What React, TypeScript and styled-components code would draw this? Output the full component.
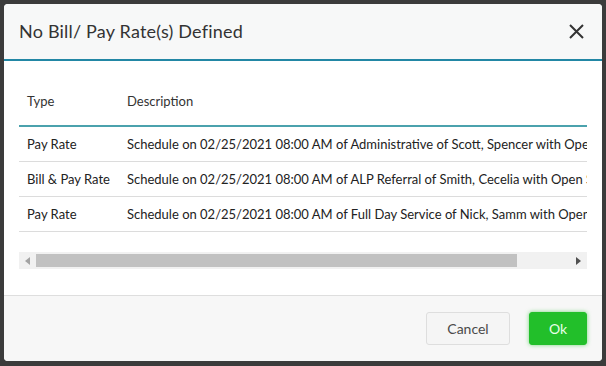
import React from "react";
import styled, { createGlobalStyle } from "styled-components";

type Row = {
  type: string;
  description: string;
};

const rows: Row[] = [
  {
    type: "Pay Rate",
    description:
      "Schedule on 02/25/2021 08:00 AM of Administrative of Scott, Spencer with Open Shift",
  },
  {
    type: "Bill & Pay Rate",
    description: "Schedule on 02/25/2021 08:00 AM of ALP Referral of Smith, Cecelia with Open Shift",
  },
  {
    type: "Pay Rate",
    description: "Schedule on 02/25/2021 08:00 AM of Full Day Service of Nick, Samm with Open Shift",
  },
];

// visible width of the grid vs. width of its content
const VIEW_WIDTH = 568;
const TABLE_WIDTH = 630;
const ARROW = 17;

const GlobalStyle = createGlobalStyle`
  html, body {
    margin: 0;
    padding: 0;
    background: #3b3b3b;
  }
  body {
    font-family: Lato, "Open Sans", sans-serif;
  }
`;

const App: React.FC = () => {
  const thumbWidth = Math.round(((VIEW_WIDTH - ARROW * 2) * VIEW_WIDTH) / TABLE_WIDTH);

  return (
    <>
      <GlobalStyle />
      <Backdrop>
        <Modal>
          <Header>
            <Title>No Bill/ Pay Rate(s) Defined</Title>
            <CloseButton aria-label="Close">
              <svg width="15" height="15" viewBox="0 0 15 15">
                <path d="M1 1 L14 14 M14 1 L1 14" stroke="#333" strokeWidth="2" />
              </svg>
            </CloseButton>
          </Header>

          <Body>
            <TableView>
              <Table>
                <thead>
                  <tr>
                    <HeadCell $width={84}>Type</HeadCell>
                    <HeadCell>Description</HeadCell>
                  </tr>
                </thead>
                <tbody>
                  {rows.map((row, i) => (
                    <tr key={i}>
                      <Cell>{row.type}</Cell>
                      <Cell>{row.description}</Cell>
                    </tr>
                  ))}
                </tbody>
              </Table>
            </TableView>

            <ScrollBar>
              <ScrollArrow>
                <svg width="5" height="8" viewBox="0 0 5 8">
                  <path d="M0 4 L5 0 L5 8 Z" fill="#a3a3a3" />
                </svg>
              </ScrollArrow>
              <ScrollTrack>
                <ScrollThumb style={{ width: thumbWidth }} />
              </ScrollTrack>
              <ScrollArrow>
                <svg width="5" height="8" viewBox="0 0 5 8">
                  <path d="M5 4 L0 0 L0 8 Z" fill="#505050" />
                </svg>
              </ScrollArrow>
            </ScrollBar>
          </Body>

          <Footer>
            <Button>Cancel</Button>
            <Button $primary>Ok</Button>
          </Footer>
        </Modal>
      </Backdrop>
    </>
  );
};

const Backdrop = styled.div`
  width: 606px;
  height: 366px;
  box-sizing: border-box;
  padding: 4px;
  background: #3b3b3b;
`;

const Modal = styled.div`
  width: 598px;
  height: 357px;
  display: flex;
  flex-direction: column;
  background: #fff;
  border-radius: 4px;
  overflow: hidden;
`;

const Header = styled.div`
  height: 55px;
  flex-shrink: 0;
  display: flex;
  align-items: center;
  justify-content: space-between;
  padding: 0 18px 0 15px;
  background: #f7f8f8;
  border-bottom: 2px solid #2287a5;
`;

const Title = styled.h2`
  margin: 0 0 1px 0;
  font-size: 18px;
  font-weight: 400;
  color: #333;
  letter-spacing: 0.2px;
`;

const CloseButton = styled.button`
  border: 0;
  background: transparent;
  padding: 0;
  display: flex;
  cursor: pointer;
`;

const Body = styled.div`
  flex: 1;
  padding: 15px 15px 0 15px;
`;

const TableView = styled.div`
  width: ${VIEW_WIDTH}px;
  overflow: hidden;
`;

const Table = styled.table`
  width: ${TABLE_WIDTH}px;
  table-layout: fixed;
  border-collapse: collapse;
`;

const HeadCell = styled.th<{ $width?: number }>`
  width: ${(p) => (p.$width ? `${p.$width}px` : "auto")};
  height: 49px;
  padding: 0 8px;
  text-align: left;
  font-size: 13px;
  font-weight: 400;
  color: #333;
  border-bottom: 2px solid #4ba2ad;
  white-space: nowrap;
`;

const Cell = styled.td`
  height: 34px;
  padding: 0 8px;
  font-size: 13px;
  color: #222;
  border-bottom: 1px solid #dcdcdc;
  white-space: nowrap;
  overflow: hidden;
`;

const ScrollBar = styled.div`
  margin-top: 20px;
  width: ${VIEW_WIDTH}px;
  height: ${ARROW}px;
  display: flex;
  background: #f1f1f1;
`;

const ScrollArrow = styled.div`
  width: ${ARROW}px;
  flex-shrink: 0;
  display: flex;
  align-items: center;
  justify-content: center;
`;

const ScrollTrack = styled.div`
  flex: 1;
  display: flex;
  align-items: center;
`;

const ScrollThumb = styled.div`
  height: 13px;
  background: #c1c1c1;
`;

const Footer = styled.div`
  height: 66px;
  flex-shrink: 0;
  display: flex;
  align-items: center;
  justify-content: flex-end;
  gap: 19px;
  padding: 0 15px;
  background: #f7f7f7;
  border-top: 1px solid #dedede;
  box-sizing: border-box;
`;

const Button = styled.button<{ $primary?: boolean }>`
  height: 33px;
  min-width: ${(p) => (p.$primary ? "58px" : "84px")};
  padding: 0 12px;
  border-radius: 3px;
  font-family: Lato, "Open Sans", sans-serif;
  font-size: 14px;
  cursor: pointer;
  border: 1px solid ${(p) => (p.$primary ? "#22bf2a" : "#dedede")};
  background: ${(p) => (p.$primary ? "#22bf2a" : "#f5f5f5")};
  color: ${(p) => (p.$primary ? "#e8ffe8" : "#4a4a4a")};
  box-shadow: ${(p) => (p.$primary ? "0 0 4px rgba(34, 191, 42, 0.6)" : "none")};
`;

export default App;
